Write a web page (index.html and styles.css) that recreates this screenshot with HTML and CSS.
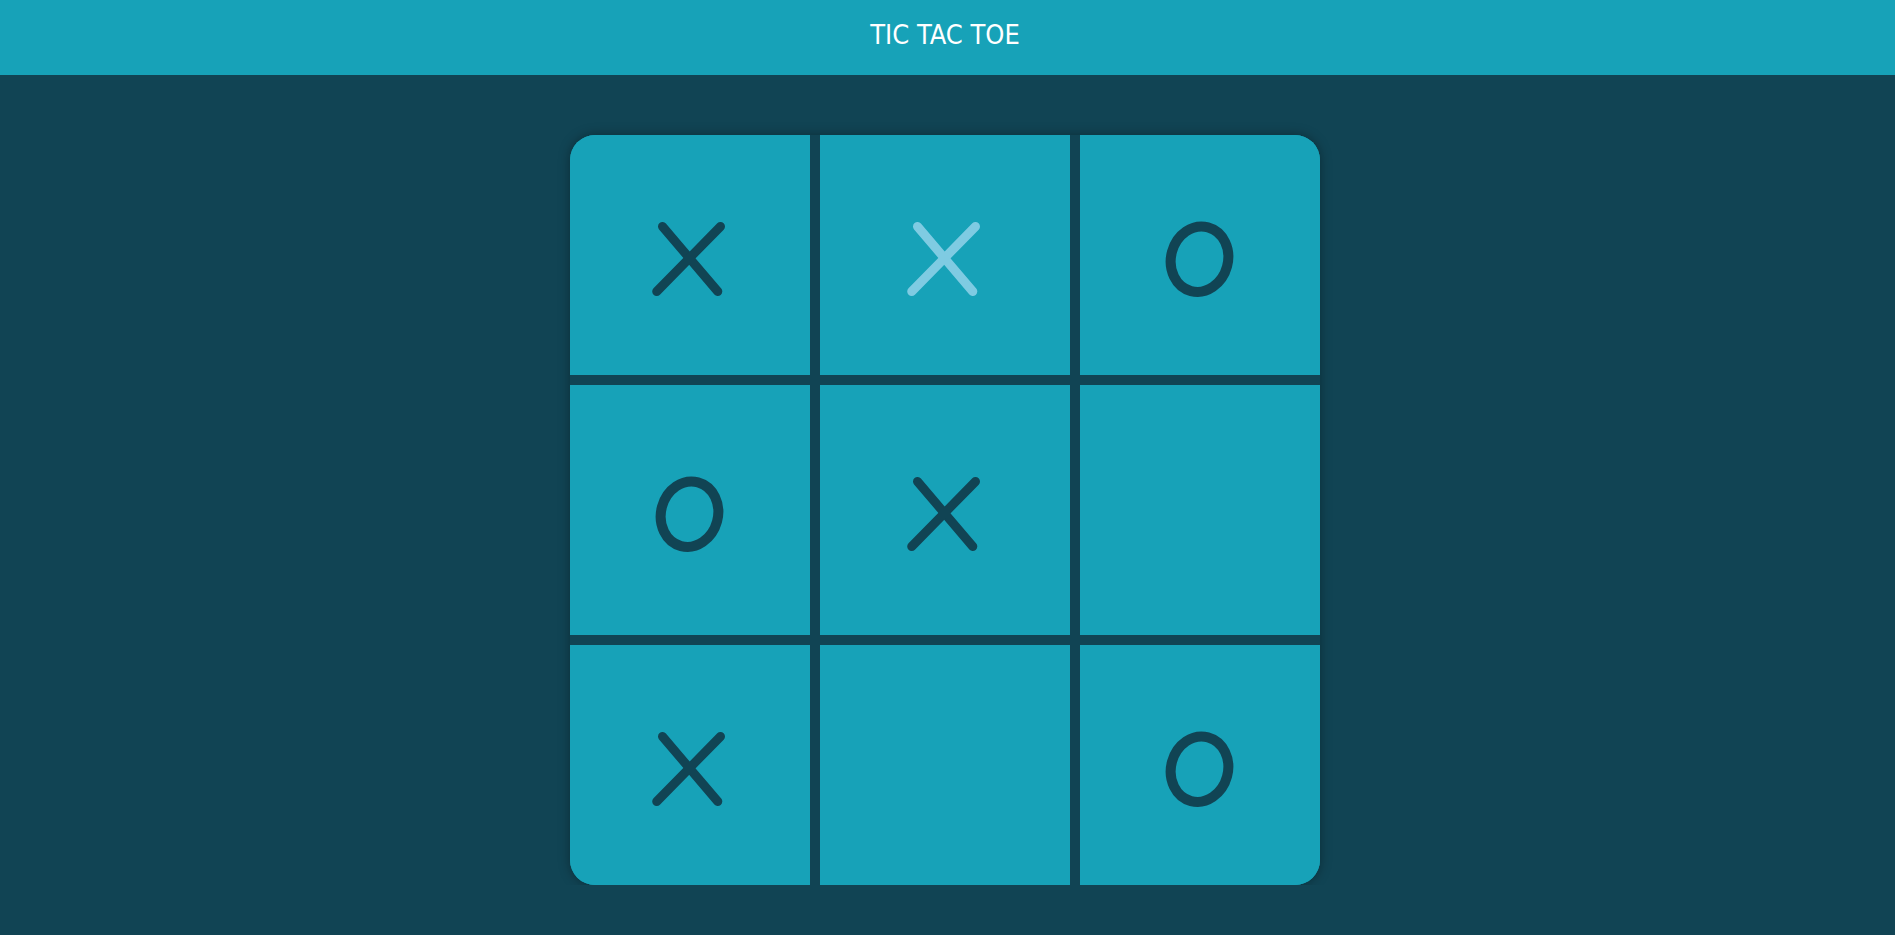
FILE: index.html
```html
<!DOCTYPE html>
<html lang="en">
<head>
<meta charset="utf-8">
<title>Tic Tac Toe</title>
<link rel="stylesheet" href="styles.css">
</head>
<body>
<svg width="0" height="0" class="defs" aria-hidden="true">
  <defs>
    <g id="mark-x" stroke-width="9" stroke-linecap="round" fill="none">
      <line x1="-27.5" y1="-28.5" x2="27.8" y2="36.5"/>
      <line x1="30.5" y1="-28.5" x2="-33.3" y2="36.5"/>
    </g>
    <g id="mark-o" stroke-width="10" fill="none">
      <ellipse cx="-0.5" cy="4.2" rx="28.5" ry="33" transform="rotate(15 -0.5 4.2)"/>
    </g>
  </defs>
</svg>
<header class="topbar"><h1 class="title">TIC TAC TOE</h1></header>
<main class="main">
  <div class="board">
    <div class="cell col-a row-a"><svg class="mark" viewBox="-45 -45 90 90"><use href="#mark-x"/></svg></div>
    <div class="cell row-a"><svg class="mark light" viewBox="-45 -45 90 90"><use href="#mark-x"/></svg></div>
    <div class="cell col-c row-a"><svg class="mark" viewBox="-45 -45 90 90"><use href="#mark-o"/></svg></div>
    <div class="cell col-a"><svg class="mark" viewBox="-45 -45 90 90"><use href="#mark-o"/></svg></div>
    <div class="cell"><svg class="mark" viewBox="-45 -45 90 90"><use href="#mark-x"/></svg></div>
    <div class="cell col-c"></div>
    <div class="cell col-a row-c"><svg class="mark" viewBox="-45 -45 90 90"><use href="#mark-x"/></svg></div>
    <div class="cell row-c"></div>
    <div class="cell col-c row-c"><svg class="mark" viewBox="-45 -45 90 90"><use href="#mark-o"/></svg></div>
  </div>
</main>
</body>
</html>
```
FILE: styles.css
```css
html, body {
  margin: 0;
  padding: 0;
  background: #114454;
}
.defs {
  position: absolute;
  width: 0;
  height: 0;
}
.topbar {
  height: 75px;
  background: #17a2b8;
  display: flex;
  align-items: center;
  justify-content: center;
  padding-right: 5px;
}
.title {
  margin: 0 0 6px 0;
  font-family: "DejaVu Sans Condensed", "DejaVu Sans", sans-serif;
  font-weight: normal;
  font-size: 27px;
  line-height: 1;
  color: #ffffff;
}
.main {
  display: flex;
  justify-content: center;
  padding: 60px 5px 0 0;
}
.board {
  width: 750px;
  height: 750px;
  display: grid;
  grid-template-columns: repeat(3, 250px);
  grid-template-rows: repeat(3, 250px);
  border-radius: 25px;
  overflow: hidden;
  background: #17a2b8;
  box-shadow: 0 0 12px rgba(0, 0, 0, 0.35);
}
.cell {
  box-sizing: border-box;
  background: #17a2b8;
  display: flex;
  align-items: center;
  justify-content: center;
}
.col-a {
  border-right: 10px solid #114454;
}
.col-c {
  border-left: 10px solid #114454;
}
.row-a {
  border-bottom: 10px solid #114454;
}
.row-c {
  border-top: 10px solid #114454;
}
.mark {
  width: 90px;
  height: 90px;
  flex: none;
  stroke: #114454;
}
.mark.light {
  stroke: #7fcbe2;
}
```
